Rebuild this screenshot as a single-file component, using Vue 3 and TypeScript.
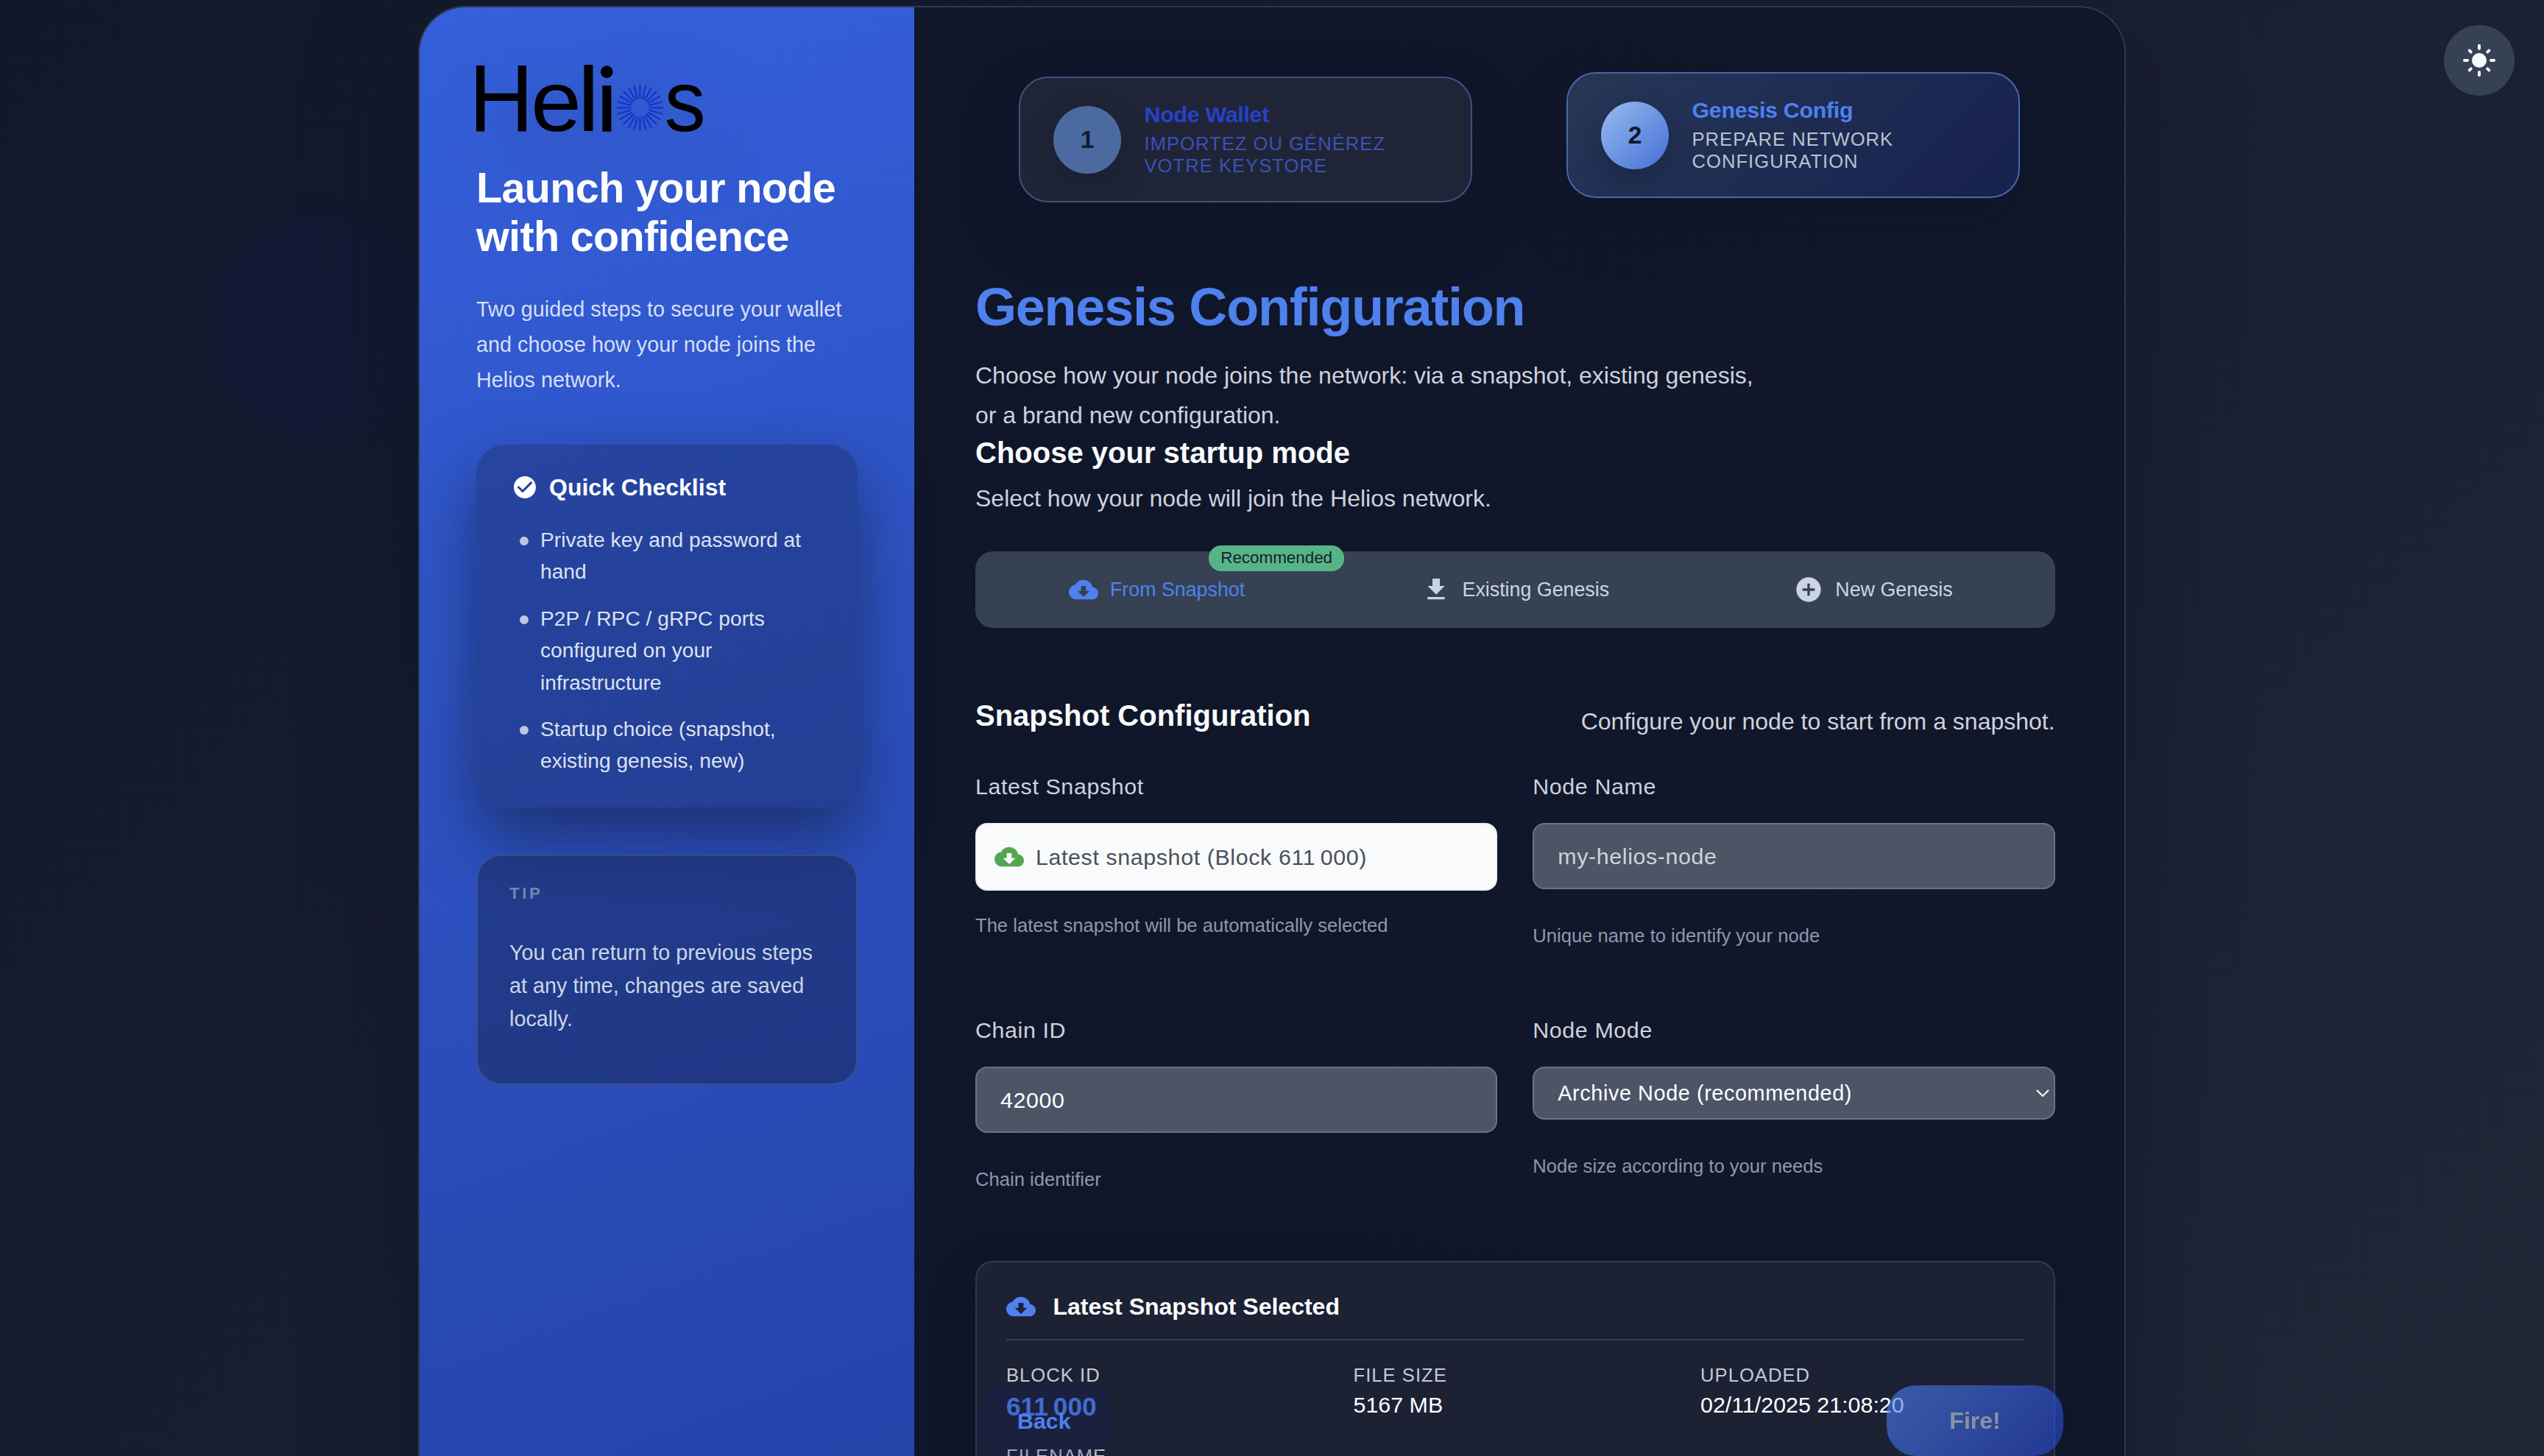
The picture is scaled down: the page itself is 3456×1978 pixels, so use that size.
<script setup lang="ts">
interface Field {
  label: string
  kind: 'snapshot' | 'placeholder' | 'input' | 'select'
  value: string
  help: string
}

const rays: number[] = Array.from({ length: 24 }, (_, i) => i * 15)

const checklist: string[] = [
  'Private key and password at\nhand',
  'P2P / RPC / gRPC ports\nconfigured on your\ninfrastructure',
  'Startup choice (snapshot,\nexisting genesis, new)',
]

const fields: Field[] = [
  { label: 'Latest Snapshot', kind: 'snapshot', value: 'Latest snapshot (Block 611\u202f000)', help: 'The latest snapshot will be automatically selected' },
  { label: 'Node Name', kind: 'placeholder', value: 'my-helios-node', help: 'Unique name to identify your node' },
  { label: 'Chain ID', kind: 'input', value: '42000', help: 'Chain identifier' },
  { label: 'Node Mode', kind: 'select', value: 'Archive Node (recommended)', help: 'Node size according to your needs' },
]

const cloudPath =
  'M19.35 10.04C18.67 6.59 15.64 4 12 4 9.11 4 6.6 5.64 5.35 8.04 2.34 8.36 0 10.91 0 14c0 3.31 2.69 6 6 6h13c2.76 0 5-2.24 5-5 0-2.64-2.05-4.78-4.65-4.96zM17 13l-5 5-5-5h3V9h4v4h3z'
const checkPath =
  'M12 2C6.48 2 2 6.48 2 12s4.48 10 10 10 10-4.48 10-10S17.52 2 12 2zm-2 15l-5-5 1.41-1.41L10 14.17l7.59-7.59L19 8l-9 9z'
const downloadPath = 'M19 9h-4V3H9v6H5l7 7 7-7zM5 18v2h14v-2H5z'
const plusPath =
  'M12 2C6.48 2 2 6.48 2 12s4.48 10 10 10 10-4.48 10-10S17.52 2 12 2zm5 11h-4v4h-2v-4H7v-2h4V7h2v4h4v2z'
</script>

<template>
  <div class="page">
    <div class="blob"></div>

    <div class="shell">
      <aside class="sidebar">
        <svg class="logo" viewBox="637 47 340 170" width="340" height="170">
          <g fill="#000" text-anchor="middle" font-family="Liberation Sans, sans-serif">
            <text transform="translate(681 177.5) scale(.937 1)" font-size="130">H</text>
            <text transform="translate(755.5 177.5) scale(1.07 1)" font-size="116">e</text>
            <text transform="translate(799.5 177.5) scale(1.1 1)" font-size="124">l</text>
            <text class="logo-i" transform="translate(824.4 177.5)" font-size="119.6">i</text>
            <text transform="translate(930.5 177.5) scale(.97 1)" font-size="116">s</text>
          </g>
          <g stroke="#1433c8" stroke-width="2.2" stroke-linecap="round">
            <line
              v-for="a in rays"
              :key="a"
              x1="869.4"
              y1="133.4"
              x2="869.4"
              y2="115.4"
              :transform="`rotate(${a} 869.4 146.4)`"
            />
          </g>
        </svg>

        <h1 class="pitch">Launch your node<br />with confidence</h1>
        <p class="intro">Two guided steps to secure your wallet<br />and choose how your node joins the<br />Helios network.</p>

        <section class="checklist">
          <div class="checklist-title">
            <svg viewBox="0 0 24 24" width="36" height="36"><path fill="#fff" :d="checkPath" /></svg>
            <span>Quick Checklist</span>
          </div>
          <ul>
            <li v-for="item in checklist" :key="item"><i class="dot"></i><span>{{ item }}</span></li>
          </ul>
        </section>

        <section class="tip">
          <div class="tip-label">TIP</div>
          <p>You can return to previous steps<br />at any time, changes are saved<br />locally.</p>
        </section>
      </aside>

      <main class="main">
        <nav class="steps">
          <div class="step">
            <div class="num">1</div>
            <div>
              <div class="step-title">Node Wallet</div>
              <div class="step-sub">IMPORTEZ OU GÉNÉREZ<br />VOTRE KEYSTORE</div>
            </div>
          </div>
          <div class="step active">
            <div class="num">2</div>
            <div>
              <div class="step-title">Genesis Config</div>
              <div class="step-sub">PREPARE NETWORK<br />CONFIGURATION</div>
            </div>
          </div>
        </nav>

        <h2 class="title">Genesis Configuration</h2>
        <p class="lead">Choose how your node joins the network: via a snapshot, existing genesis,<br />or a brand new configuration.</p>
        <h3 class="sub-title">Choose your startup mode</h3>
        <p class="lead select-lead">Select how your node will join the Helios network.</p>

        <div class="tabs">
          <div class="tab on">
            <svg viewBox="0 0 24 24" width="40" height="40"><path fill="currentColor" :d="cloudPath" /></svg>
            <span>From Snapshot</span>
            <em class="badge">Recommended</em>
          </div>
          <div class="tab">
            <svg viewBox="0 0 24 24" width="40" height="40"><path fill="currentColor" :d="downloadPath" /></svg>
            <span>Existing Genesis</span>
          </div>
          <div class="tab">
            <svg viewBox="0 0 24 24" width="40" height="40"><path fill="currentColor" :d="plusPath" /></svg>
            <span>New Genesis</span>
          </div>
        </div>

        <div class="section-head">
          <h3 class="sub-title">Snapshot Configuration</h3>
          <p class="lead">Configure your node to start from a snapshot.</p>
        </div>

        <div class="fields">
          <div v-for="f in fields" :key="f.label" class="field">
            <div class="label">{{ f.label }}</div>
            <div class="control" :class="f.kind">
              <svg v-if="f.kind === 'snapshot'" viewBox="0 0 24 24" width="40" height="40">
                <path fill="#54a650" :d="cloudPath" />
              </svg>
              <span>{{ f.value }}</span>
              <svg v-if="f.kind === 'select'" class="chevron" viewBox="0 0 18 10" width="18" height="10">
                <path d="M1 1l8 8 8-8" fill="none" stroke="#fff" stroke-width="2" />
              </svg>
            </div>
            <div class="help">{{ f.help }}</div>
          </div>
        </div>

        <section class="summary">
          <div class="summary-head">
            <svg viewBox="0 0 24 24" width="40" height="40"><path fill="#4e81ee" :d="cloudPath" /></svg>
            <span>Latest Snapshot Selected</span>
          </div>
          <div class="facts">
            <div>
              <div class="fact-label">BLOCK ID</div>
              <div class="fact-value big">611&#x202f;000</div>
            </div>
            <div>
              <div class="fact-label">FILE SIZE</div>
              <div class="fact-value">5167 MB</div>
            </div>
            <div>
              <div class="fact-label">UPLOADED</div>
              <div class="fact-value">02/11/2025 21:08:20</div>
            </div>
            <div>
              <div class="fact-label">FILENAME</div>
            </div>
          </div>
        </section>
      </main>
    </div>

    <footer class="actions">
      <button class="back" type="button">Back</button>
      <button class="fire" type="button">Fire!</button>
    </footer>

    <button class="theme" type="button" aria-label="Theme">
      <svg viewBox="-24 -24 48 48" width="48" height="48">
        <circle r="10" fill="#f8fafc" />
        <g stroke="#f8fafc" stroke-width="4" stroke-linecap="round">
          <path d="M0-16V-20M0 16V20M-16 0H-20M16 0H20" />
          <path d="M-11.3-11.3l-2-2M11.3-11.3l2-2M-11.3 11.3l-2 2M11.3 11.3l2 2" />
        </g>
      </svg>
    </button>
  </div>
</template>

<style>
body {
  background: #111628;
  overflow: hidden;
}
</style>

<style scoped>
* {
  box-sizing: border-box;
}
h1, h2, h3, p, ul {
  margin: 0;
  padding: 0;
}
svg {
  display: block;
  flex: none;
}
button {
  border: 0;
  font-family: inherit;
}
.page {
  position: relative;
  width: 3456px;
  height: 1978px;
  overflow: hidden;
  font-family: 'Liberation Sans', Arial, Helvetica, sans-serif;
  color: #fff;
  background: linear-gradient(135deg, #11182a 0%, #191e30 50%, #1f2737 100%);
}
.blob {
  position: absolute;
  left: 278px;
  top: 290px;
  width: 310px;
  height: 310px;
  border-radius: 50%;
  background: rgba(14, 26, 64, 0.4);
  filter: blur(10px);
}
.shell {
  position: relative;
  display: flex;
  width: 2320px;
  height: 2200px;
  margin: 8px 0 0 568px;
  border: 2px solid #2f394c;
  border-radius: 64px;
  overflow: hidden;
  background: linear-gradient(100deg, #0f162a, #12172a);
  box-shadow: 0 60px 140px rgba(12, 17, 34, 0.5);
}
.sidebar {
  flex: none;
  width: 672px;
  padding: 37px 77px 0;
  background: linear-gradient(160deg, #3560dc 0%, #2440a4 100%);
}
.logo {
  margin-left: -10px;
  filter: drop-shadow(0 24px 50px rgba(15, 23, 42, 0.25));
}
.logo-i {
  font-family: Lato, sans-serif;
  stroke: #000;
  stroke-width: 1.4;
}
.pitch {
  margin-top: 5px;
  font-size: 57.6px;
  line-height: 66.24px;
  letter-spacing: -0.012em;
  white-space: nowrap;
}
.intro {
  margin-top: 43px;
  font-size: 28.8px;
  line-height: 47.52px;
  color: #d6dff6;
  white-space: nowrap;
}
.checklist {
  width: 518px;
  height: 493px;
  margin-top: 64px;
  padding: 40px 48px;
  border-radius: 40px;
  background: rgba(15, 23, 42, 0.28);
  box-shadow: 0 40px 90px rgba(15, 23, 42, 0.55);
}
.checklist-title {
  display: flex;
  align-items: center;
  gap: 15px;
  height: 36px;
  font-size: 32px;
  font-weight: 700;
}
.checklist ul {
  display: flex;
  flex-direction: column;
  gap: 20px;
  margin-top: 32px;
  padding-left: 11px;
  list-style: none;
}
.checklist li {
  display: flex;
  gap: 16px;
  font-size: 28.2px;
  line-height: 43.4px;
  color: #dbe2f0;
  white-space: pre;
}
.dot {
  flex: none;
  width: 12px;
  height: 12px;
  margin-top: 17px;
  border-radius: 50%;
  background: #bdc6df;
}
.tip {
  width: 518px;
  height: 313px;
  margin-top: 64px;
  padding: 38px 43px;
  border: 2px solid rgba(148, 163, 184, 0.22);
  border-radius: 34px;
  background: rgba(15, 23, 42, 0.35);
}
.tip-label {
  font-size: 22.4px;
  font-weight: 700;
  line-height: 26px;
  letter-spacing: 0.16em;
  color: #7484ac;
}
.tip p {
  margin-top: 45px;
  font-size: 28.8px;
  line-height: 45px;
  color: #cbd5e6;
  white-space: nowrap;
}
.main {
  flex: none;
  width: 1644px;
  padding: 94px 94.4px 0 83px;
}
.steps {
  display: flex;
  gap: 128px;
  margin-left: 59px;
}
.step {
  display: flex;
  align-items: center;
  gap: 31.5px;
  width: 616px;
  height: 171px;
  padding-left: 45px;
  flex: none;
  border: 2px solid #3c5480;
  border-radius: 40px;
  background: #1f2536;
  box-shadow: 0 36px 80px rgba(13, 19, 38, 0.3);
  white-space: nowrap;
}
.step.active {
  transform: translateY(-6px);
  border-color: #486aa8;
  background: linear-gradient(135deg, #263757, #16214e) padding-box;
}
.num {
  display: flex;
  align-items: center;
  justify-content: center;
  width: 92px;
  height: 92px;
  border-radius: 50%;
  font-size: 33.6px;
  font-weight: 700;
  color: #131c30;
  background: #4b6ba0;
  box-shadow: 0 16px 36px rgba(15, 23, 42, 0.35);
}
.active .num {
  color: #0f172a;
  background: linear-gradient(135deg, #97bbf2, #446fd2);
}
.step-title {
  font-size: 30.4px;
  font-weight: 700;
  line-height: 35px;
  letter-spacing: -0.01em;
  color: #2841cb;
}
.step-sub {
  margin-top: 8px;
  font-size: 25.6px;
  line-height: 29.8px;
  letter-spacing: 0.04em;
  color: #3d50b6;
}
.active .step-title {
  color: #4e81ee;
}
.active .step-sub {
  color: #bac2cf;
}
.title {
  margin-top: 102px;
  font-size: 72px;
  line-height: 80px;
  letter-spacing: -0.017em;
  color: #4e81ee;
}
.lead {
  font-size: 32px;
  line-height: 54.4px;
  color: #cbd2de;
  white-space: nowrap;
}
.title + .lead {
  margin-top: 25.7px;
}
.sub-title {
  font-size: 40px;
  line-height: 46px;
  color: #f8fafc;
}
.select-lead {
  margin-top: 12.4px;
}
.tabs {
  display: flex;
  gap: 9.6px;
  height: 104px;
  margin-top: 45px;
  padding: 8px;
  border-radius: 24px;
  background: #364153;
}
.tab {
  position: relative;
  display: flex;
  flex: 1;
  align-items: center;
  justify-content: center;
  gap: 16px;
  font-size: 26.8px;
  color: #cbd5e1;
}
.tab.on {
  color: #4e81ee;
}
.badge {
  position: absolute;
  top: -16px;
  right: -16px;
  width: 184px;
  height: 35px;
  border-radius: 17px;
  font-size: 22.4px;
  font-style: normal;
  line-height: 33px;
  text-align: center;
  color: #16202f;
  background: #56b586;
}
.section-head {
  display: flex;
  justify-content: space-between;
  height: 58px;
  margin-top: 96px;
}
.section-head .lead {
  margin-top: 3.7px;
}
.fields {
  display: grid;
  grid-template-columns: 1fr 1fr;
  grid-template-rows: 331px 240px;
  column-gap: 48px;
  margin-top: 44px;
}
.label {
  font-size: 30.4px;
  line-height: 35px;
  letter-spacing: 0.02em;
  color: #cbd2de;
}
.control {
  display: flex;
  align-items: center;
  height: 90px;
  margin-top: 32px;
  padding-left: 32px;
  border: 2px solid #64748b;
  border-radius: 16px;
  font-size: 30.4px;
  letter-spacing: 0.02em;
  background: #4b5566;
}
.control.snapshot {
  height: 92px;
  padding-left: 24px;
  gap: 16px;
  color: #4b5058;
  background: #f8fafc;
  border-color: #e8ecf1;
}
.control.placeholder {
  color: #d0d3d6;
}
.control.select {
  height: 72px;
  justify-content: space-between;
  padding-right: 6px;
  font-size: 28.8px;
  letter-spacing: 0.6px;
}
.help {
  margin-top: 43px;
  font-size: 25.6px;
  line-height: 40px;
  color: #8b98ae;
}
.snapshot + .help {
  margin-top: 27px;
}
.summary {
  height: 500px;
  margin-top: 91px;
  padding: 40px;
  border: 2px solid #2c3b5c;
  border-radius: 24px;
  background: #1c2134;
  box-shadow: 0 20px 60px rgba(10, 15, 30, 0.3);
}
.summary-head {
  display: flex;
  align-items: center;
  gap: 23.5px;
  height: 66px;
  padding-bottom: 24px;
  border-bottom: 2px solid #2c3b5c;
  font-size: 32px;
  font-weight: 700;
}
.facts {
  display: grid;
  grid-template-columns: repeat(3, 1fr);
  gap: 32px;
  margin-top: 32px;
}
.fact-label {
  font-size: 25.6px;
  line-height: 30px;
  letter-spacing: 0.04em;
  color: #c3cad7;
}
.fact-value {
  margin-top: 7.7px;
  font-size: 30.4px;
  line-height: 35px;
}
.fact-value.big {
  font-size: 35.2px;
  font-weight: 700;
  line-height: 40.5px;
  letter-spacing: -0.3px;
  color: #4e81ee;
}
.actions {
  position: absolute;
  left: 1328px;
  right: 653px;
  bottom: 0;
  display: flex;
  align-items: center;
  justify-content: space-between;
  height: 96px;
}
.back {
  width: 184px;
  height: 94px;
  padding: 0 0 0 54px;
  border-radius: 40px;
  font-size: 30.4px;
  font-weight: 700;
  text-align: left;
  color: #4e81ee;
  background: rgba(22, 36, 100, 0.22);
}
.fire {
  width: 240px;
  height: 96px;
  padding: 0;
  border-radius: 40px;
  font-size: 32px;
  font-weight: 700;
  color: #d3dde8;
  background: linear-gradient(135deg, #4f83f4, #2646d2);
  opacity: 0.6;
}
.theme {
  position: absolute;
  right: 40px;
  top: 34px;
  display: flex;
  align-items: center;
  justify-content: center;
  width: 96px;
  height: 96px;
  padding: 0;
  border-radius: 50%;
  background: #364153;
}
</style>
